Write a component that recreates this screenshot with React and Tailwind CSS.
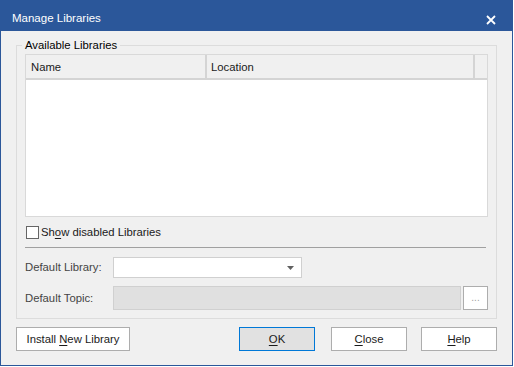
const Key = ({ children }) => <span className="underline underline-offset-2">{children}</span>

const Button = ({ children, primary, className = '' }) => (
  <button
    className={
      'h-[24px] flex items-center justify-center text-[11.3px] text-[#1a1a1a] ' +
      (primary ? 'bg-[#e1e1e1] border border-[#0078d7] ' : 'bg-white border border-[#adadad] ') +
      className
    }
  >
    <span>{children}</span>
  </button>
)

export default function App() {
  return (
    <div className="w-[514px] h-[367px] bg-white" style={{ fontFamily: '"Liberation Sans", Arial, sans-serif' }}>
      <div className="w-[513px] h-[366px] border border-[#2b579a] bg-[#f0f0f0] flex flex-col">
        <div className="h-[30px] bg-[#2b579a] flex items-center justify-between pl-[11px] pr-[16px] text-white">
          <span className="text-[11.5px] pt-[5px]">Manage Libraries</span>
          <svg width="10" height="10" viewBox="0 0 10 10" className="mt-[8px]">
            <path d="M1 1L9 9M9 1L1 9" stroke="white" strokeWidth="1.8" />
          </svg>
        </div>

        <fieldset className="mt-[7px] ml-[15px] w-[480px] h-[281px] border border-[#dcdcdc]">
          <legend className="ml-[5px] px-[3px] text-[11.3px] leading-[15px] text-black">Available Libraries</legend>
          <div className="px-[8px] pt-[1px]">
            <div className="h-[163px] border border-[#d9d9d9] bg-white flex flex-col">
              <div className="h-[25px] flex bg-[#f0f0f0] border-b-2 border-[#d4d4d4] text-[11.3px] text-[#1a1a1a]">
                <div className="w-[181px] border-r-2 border-[#d4d4d4] flex items-center pl-[5px] pt-[1px]">Name</div>
                <div className="w-[268px] border-r-2 border-[#d4d4d4] flex items-center pl-[4px] pt-[1px]">Location</div>
                <div className="flex-1" />
              </div>
            </div>

            <div className="mt-[8px] flex items-center h-[14px] text-[11.3px] text-[#1a1a1a]">
              <div className="ml-[1px] w-[13px] h-[13px] border border-[#666666] bg-white" />
              <span className="ml-[2px]">Sh<Key>o</Key>w disabled Libraries</span>
            </div>

            <div className="mt-[8px] h-px w-[461px] bg-[#a0a0a0]" />

            <div className="mt-[9px] flex items-center h-[21px] text-[11.3px] text-[#444444]">
              <span className="w-[88px]">Default Library:</span>
              <div className="w-[189px] h-[21px] bg-white border border-[#d0d0d0] flex items-center justify-end pr-[7px]">
                <svg width="7" height="4" viewBox="0 0 7 4">
                  <path d="M0 0H7L3.5 4Z" fill="#606060" />
                </svg>
              </div>
            </div>

            <div className="mt-[8px] flex items-center h-[24px] text-[11.3px] text-[#444444]">
              <span className="w-[88px]">Default Topic:</span>
              <div className="w-[348px] h-[24px] bg-[#e0e0e0] border border-[#d0d0d0]" />
              <div className="ml-[2px] w-[25px] h-[24px] bg-white border border-[#adadad] flex items-center justify-center text-[10px] text-[#a0a0a0] pb-[2px]">
                ...
              </div>
            </div>
          </div>
        </fieldset>

        <div className="mt-[8px] ml-[15px] flex">
          <Button className="w-[114px]">
            Install <Key>N</Key>ew Library
          </Button>
          <Button primary className="ml-[109px] w-[76px]">
            <Key>O</Key>K
          </Button>
          <Button className="ml-[16px] w-[76px]">
            <Key>C</Key>lose
          </Button>
          <Button className="ml-[14px] w-[76px]">
            <Key>H</Key>elp
          </Button>
        </div>
      </div>
    </div>
  )
}
